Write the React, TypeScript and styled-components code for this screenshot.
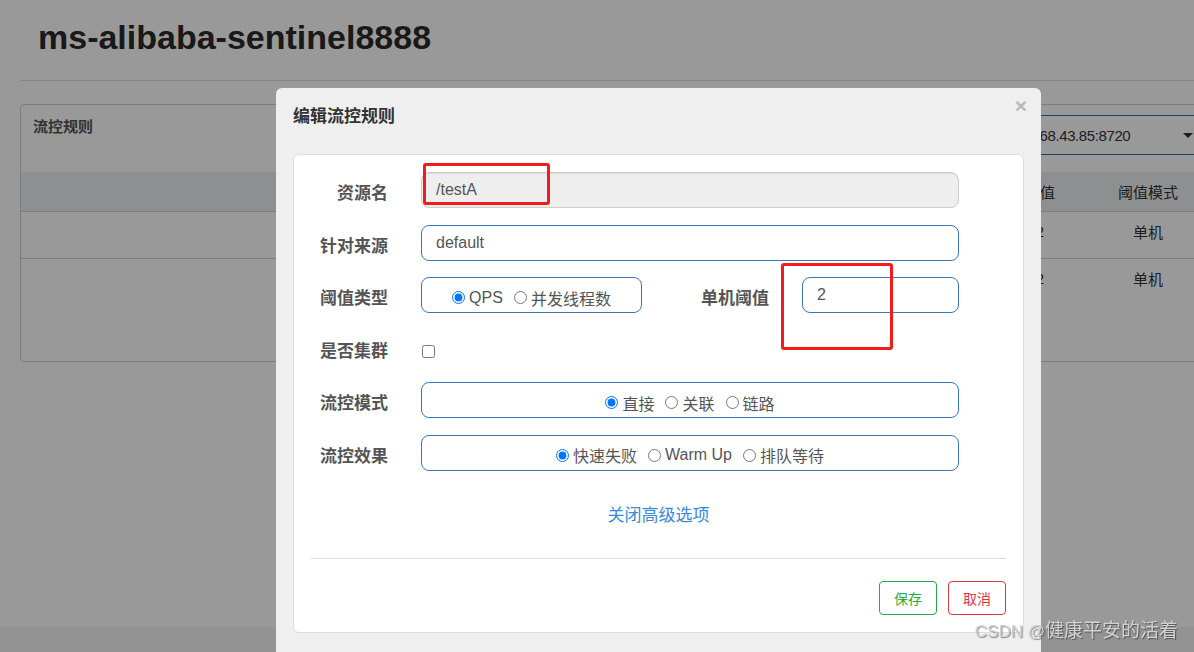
import React from "react";
import styled, { createGlobalStyle } from "styled-components";

const FONT = `"Liberation Sans", "Noto Sans CJK SC", sans-serif`;

const GlobalStyle = createGlobalStyle`
  html, body { margin: 0; padding: 0; height: 100%; overflow: hidden; }
  body { font-family: ${FONT}; background: #fff; color: #333; }
  * { box-sizing: border-box; }
`;

const Page = styled.div`
  min-height: 100vh;
  display: flex;
  flex-direction: column;
  background: #fff;
`;

const PageHeader = styled.header`
  margin-left: 20px;
  height: 81px;
  padding: 19px 0 0 18px;
  border-bottom: 1px solid #dadada;
`;

const Title = styled.h1`
  margin: 0;
  font-size: 34px;
  line-height: 37px;
  font-weight: 700;
  color: #2b2b2b;
`;

const Panel = styled.section`
  margin: 23px -20px 0 20px;
  border: 1px solid #d0d0d0;
  border-radius: 4px;
  padding-bottom: 56px;
`;

const PanelHeading = styled.div`
  height: 67px;
  display: flex;
  justify-content: space-between;
  align-items: flex-start;
  padding: 0 10px 0 12px;
`;

const PanelTitle = styled.div`
  margin-top: 12px;
  font-size: 15px;
  line-height: 20px;
  font-weight: 700;
  color: #555;
`;

const Select = styled.div`
  margin-top: 10px;
  width: 212px;
  height: 40px;
  border: 1px solid #306eaa;
  border-radius: 4px;
  display: flex;
  align-items: center;
  justify-content: space-between;
  padding: 0 9px 0 12px;
  font-size: 15px;
  letter-spacing: -0.4px;
  color: #333;
`;

const Caret = styled.span`
  width: 0;
  height: 0;
  border-left: 5px solid transparent;
  border-right: 5px solid transparent;
  border-top: 5px solid #333;
`;

const TableRow = styled.div<{ $head?: boolean }>`
  display: grid;
  grid-template-columns: 1fr 120px 120px 120px 86px 130px;
  align-items: center;
  height: ${(p) => (p.$head ? "39px" : "47px")};
  padding-bottom: ${(p) => (p.$head ? "0" : "8px")};
  background: ${(p) => (p.$head ? "#edeef2" : "transparent")};
  border-top: ${(p) => (p.$head ? "none" : "1px solid #d0d0d0")};
  font-size: 15px;
  color: #333;
`;

const Cell = styled.div`
  text-align: center;
  white-space: nowrap;
`;

const Footer = styled.footer`
  margin-top: auto;
  height: 25px;
  background: #f5f5f5;
`;

const Overlay = styled.div`
  position: fixed;
  inset: 0;
  background: rgba(0, 0, 0, 0.4);
  z-index: 10;
`;

const Modal = styled.div`
  margin: 88px 0 0 276px;
  width: 765px;
  background: #efefef;
  border-radius: 6px;
  padding-bottom: 40px;
`;

const ModalHeader = styled.div`
  height: 66px;
  display: flex;
  justify-content: space-between;
  align-items: flex-start;
  padding: 17px 14px 0 17px;
`;

const ModalTitle = styled.div`
  font-size: 17px;
  line-height: 24px;
  font-weight: 700;
  color: #333;
`;

const Close = styled.span`
  margin-top: -10px;
  font-size: 21px;
  line-height: 1;
  font-weight: 700;
  color: #b8b8b8;
  font-family: "Liberation Sans", sans-serif;
`;

const Card = styled.div`
  margin: 0 17px;
  background: #fff;
  border: 1px solid #ddd;
  border-radius: 6px;
  padding: 17px 17px 17px 17px;
`;

const Form = styled.div`
  display: flex;
  flex-direction: column;
  gap: 16.5px;
`;

const FormRow = styled.div`
  display: grid;
  grid-template-columns: 77px 538px;
  column-gap: 33px;
  align-items: center;
  height: 36px;
`;

const Label = styled.div<{ $pad?: number }>`
  text-align: right;
  font-size: 17px;
  font-weight: 700;
  color: #555;
  white-space: nowrap;
  padding-top: 3px;
  padding-right: ${(p) => p.$pad ?? 0}px;
`;

const TextInput = styled.input<{ $disabled?: boolean }>`
  width: 100%;
  height: 36px;
  border: 1px solid ${(p) => (p.$disabled ? "#ccc" : "#3a77b4")};
  background: ${(p) => (p.$disabled ? "#eee" : "#fff")};
  box-shadow: ${(p) => (p.$disabled ? "inset 0 1px 1px rgba(0,0,0,0.075)" : "none")};
  border-radius: 8px;
  padding: 0 14px;
  font-family: ${FONT};
  font-size: 16px;
  color: #555;
  outline: none;
`;

const SplitField = styled.div`
  display: grid;
  grid-template-columns: 221px 1fr 157px;
  align-items: center;
`;

const RadioBox = styled.div`
  height: 36px;
  border: 1px solid #3a77b4;
  border-radius: 8px;
  display: flex;
  align-items: center;
  justify-content: center;
  gap: 11px;
  padding-top: 5px;
`;

const RadioLabel = styled.label`
  display: inline-flex;
  align-items: center;
  gap: 4px;
  font-size: 16px;
  color: #555;
  white-space: nowrap;
`;

const Radio = styled.input`
  margin: 0;
  width: 13px;
  height: 13px;
`;

const CheckWrap = styled.div`
  display: flex;
  align-items: center;
  padding-top: 7px;
`;

const Checkbox = styled.input`
  margin: 0 0 0 1px;
  width: 13px;
  height: 13px;
`;

const LinkRow = styled.div`
  margin-top: 33.5px;
  text-align: center;
  font-size: 17px;
  line-height: 24px;
  color: #3a8ad6;
`;

const Divider = styled.hr`
  margin: 30px 0 0 0;
  border: none;
  border-top: 1px solid #ddd;
`;

const Actions = styled.div`
  margin-top: 22px;
  display: flex;
  justify-content: flex-end;
  gap: 11px;
`;

const Button = styled.button<{ $color: string }>`
  height: 34px;
  padding: 0 14px;
  background: #fff;
  border: 1px solid ${(p) => p.$color};
  border-radius: 4px;
  color: ${(p) => p.$color};
  font-family: ${FONT};
  font-size: 14px;
`;

const Mark = styled.div<{ $x: number; $y: number; $w: number; $h: number }>`
  position: absolute;
  left: ${(p) => p.$x}px;
  top: ${(p) => p.$y}px;
  width: ${(p) => p.$w}px;
  height: ${(p) => p.$h}px;
  border: 3px solid #f21c1c;
  border-radius: 3px;
`;

const Watermark = styled.div`
  position: absolute;
  right: 16px;
  bottom: 9px;
  font-size: 19px;
  line-height: 22px;
  color: #d2d2d2;
  text-shadow: 1px 1px 1px rgba(0, 0, 0, 0.45);
  white-space: nowrap;
`;

const Latin = styled.span`
  font-size: 17px;
`;

const headers = ["", "", "", "", "阈值", "阈值模式"];
const rows = [
  ["", "", "", "", "2", "单机"],
  ["", "", "", "", "2", "单机"],
];

export default function App() {
  return (
    <>
      <GlobalStyle />
      <Page>
        <PageHeader>
          <Title>ms-alibaba-sentinel8888</Title>
        </PageHeader>
        <Panel>
          <PanelHeading>
            <PanelTitle>流控规则</PanelTitle>
            <Select>
              <span>192.168.43.85:8720</span>
              <Caret />
            </Select>
          </PanelHeading>
          <TableRow $head>
            {headers.map((h, j) => (
              <Cell key={j}>{h}</Cell>
            ))}
          </TableRow>
          {rows.map((r, i) => (
            <TableRow key={i}>
              {r.map((c, j) => (
                <Cell key={j}>{c}</Cell>
              ))}
            </TableRow>
          ))}
        </Panel>
        <Footer />
      </Page>
      <Overlay>
        <Modal>
          <ModalHeader>
            <ModalTitle>编辑流控规则</ModalTitle>
            <Close>×</Close>
          </ModalHeader>
          <Card>
            <Form>
              <FormRow>
                <Label>资源名</Label>
                <TextInput $disabled readOnly defaultValue="/testA" />
              </FormRow>
              <FormRow>
                <Label>针对来源</Label>
                <TextInput defaultValue="default" />
              </FormRow>
              <FormRow>
                <Label>阈值类型</Label>
                <SplitField>
                  <RadioBox>
                    <RadioLabel>
                      <Radio type="radio" name="grade" defaultChecked />
                      QPS
                    </RadioLabel>
                    <RadioLabel>
                      <Radio type="radio" name="grade" />
                      并发线程数
                    </RadioLabel>
                  </RadioBox>
                  <Label $pad={33}>单机阈值</Label>
                  <TextInput defaultValue="2" />
                </SplitField>
              </FormRow>
              <FormRow>
                <Label>是否集群</Label>
                <CheckWrap>
                  <Checkbox type="checkbox" />
                </CheckWrap>
              </FormRow>
              <FormRow>
                <Label>流控模式</Label>
                <RadioBox>
                  <RadioLabel>
                    <Radio type="radio" name="strategy" defaultChecked />
                    直接
                  </RadioLabel>
                  <RadioLabel>
                    <Radio type="radio" name="strategy" />
                    关联
                  </RadioLabel>
                  <RadioLabel>
                    <Radio type="radio" name="strategy" />
                    链路
                  </RadioLabel>
                </RadioBox>
              </FormRow>
              <FormRow>
                <Label>流控效果</Label>
                <RadioBox>
                  <RadioLabel>
                    <Radio type="radio" name="behavior" defaultChecked />
                    快速失败
                  </RadioLabel>
                  <RadioLabel>
                    <Radio type="radio" name="behavior" />
                    Warm Up
                  </RadioLabel>
                  <RadioLabel>
                    <Radio type="radio" name="behavior" />
                    排队等待
                  </RadioLabel>
                </RadioBox>
              </FormRow>
            </Form>
            <LinkRow>关闭高级选项</LinkRow>
            <Divider />
            <Actions>
              <Button $color="#28a745">保存</Button>
              <Button $color="#dc3545">取消</Button>
            </Actions>
          </Card>
        </Modal>
        <Mark $x={423} $y={163} $w={127} $h={42} />
        <Mark $x={781} $y={263} $w={112} $h={87} />
        <Watermark>
          <Latin>CSDN @</Latin>健康平安的活着
        </Watermark>
      </Overlay>
    </>
  );
}
